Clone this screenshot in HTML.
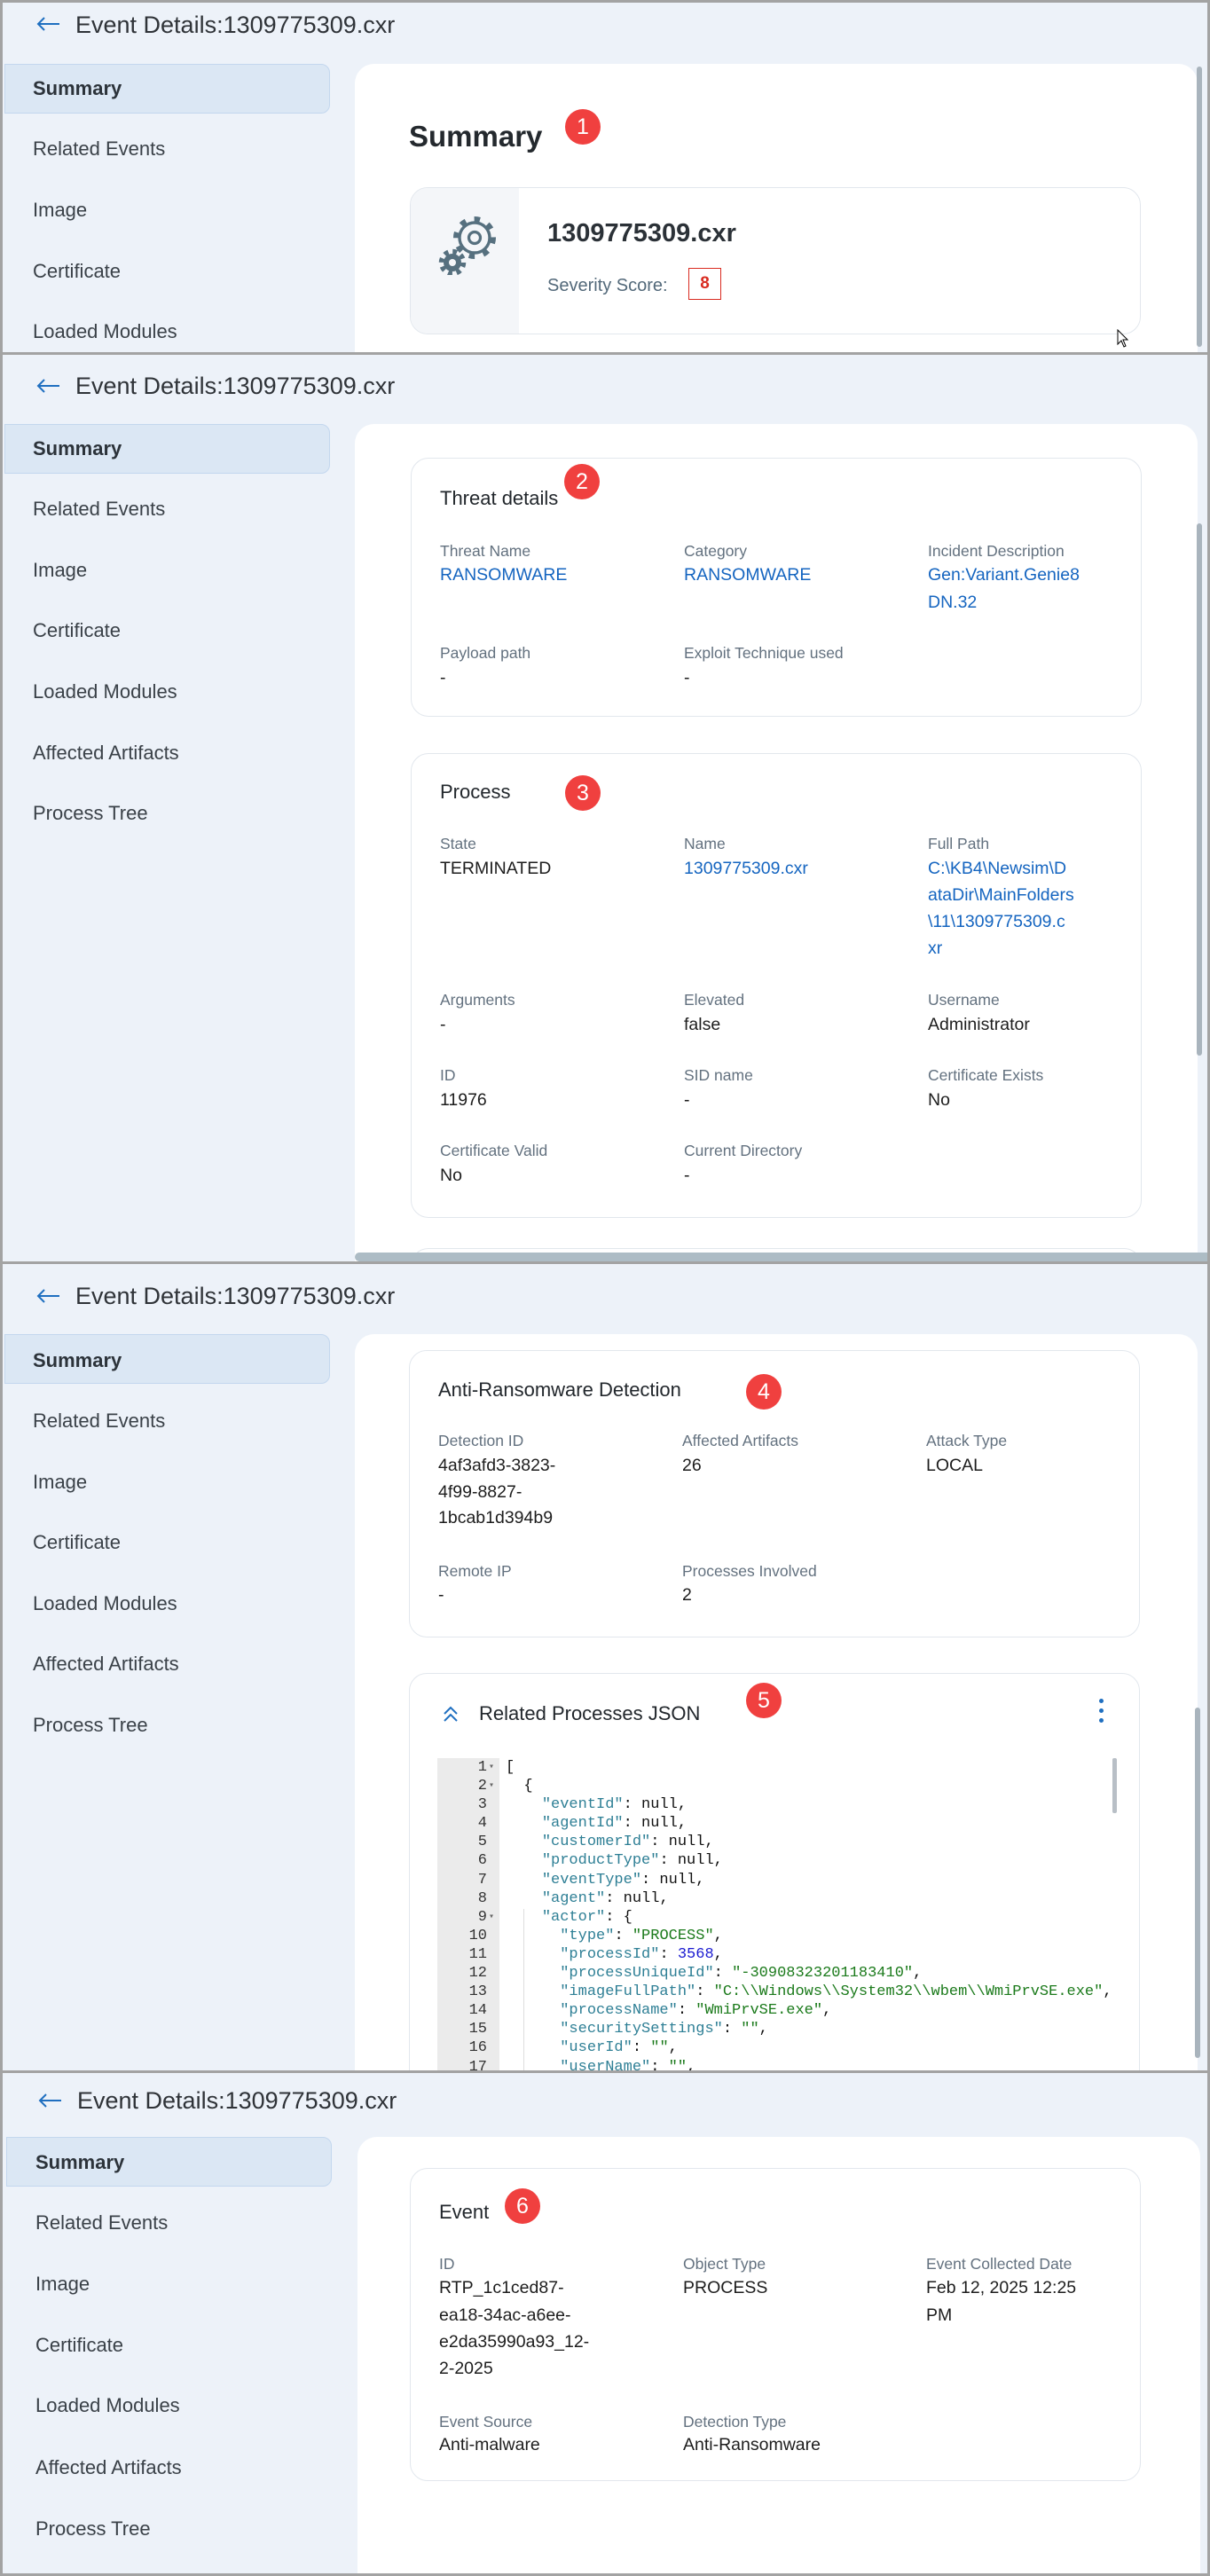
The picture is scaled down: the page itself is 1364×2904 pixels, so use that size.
<!DOCTYPE html>
<html><head><meta charset="utf-8">
<style>
*{margin:0;padding:0;box-sizing:border-box}
html,body{width:1364px;height:2904px;overflow:hidden}
body{background:#edf2f9;font-family:"Liberation Sans",Arial,sans-serif;color:#1f2327;position:relative}
.panel{position:absolute;left:0;width:1364px;background:#edf2f9;border:3px solid #a3a3a3;overflow:hidden}
.t{position:absolute;white-space:nowrap;line-height:30px}
.hd{font-size:27px;color:#2f3338}
.arr{position:absolute;width:30px;height:20px}
.side{position:absolute;left:2px;width:367px;height:56px;background:#dbe7f4;border:1.5px solid #c3d7ee;border-radius:0 10px 10px 0}
.si{font-size:22px;color:#3a4148}
.sb{font-weight:bold;color:#2c333a}
.main{position:absolute;left:397px;width:950px;background:#fff;border-radius:22px 22px 0 0}
.card{position:absolute;left:460px;width:824px;background:#fff;border:1.5px solid #e2e7ed;border-radius:20px}
.ct{font-size:22px;color:#22272c}
.lb{font-size:17.5px;color:#63717f}
.v{font-size:19.5px;color:#1d1d1d}
.b{color:#1565c0}
.badge{position:absolute;width:40px;height:40px;border-radius:50%;background:#f0403f;color:#fff;font-size:25px;text-align:center;line-height:40px}
.vs{position:absolute;width:6px;background:#a9b4bd;border-radius:3px}
.code{position:absolute;font-family:"Liberation Mono",monospace;font-size:17px;line-height:21.1px;white-space:pre;color:#111}
.k{color:#2e7f95}.s{color:#1b7a1b}.n{color:#1a1ad0}
</style></head><body>

<!-- PANEL 1 -->
<div class="panel" style="top:0;height:400px">
 <svg class="arr" style="left:36px;top:14px" viewBox="0 0 30 20"><path d="M28 10H4M11 3L4 10l7 7" fill="none" stroke="#1f6fc0" stroke-width="2"/></svg>
 <div class="t hd" style="left:82px;top:10px">Event Details:1309775309.cxr</div>
 <div class="side" style="top:69px"></div>
 <div class="t si sb" style="left:34px;top:82px">Summary</div>
 <div class="t si" style="left:34px;top:150px">Related Events</div>
 <div class="t si" style="left:34px;top:219px">Image</div>
 <div class="t si" style="left:34px;top:288px">Certificate</div>
 <div class="t si" style="left:34px;top:356px">Loaded Modules</div>
 <div class="main" style="top:69px;height:331px"></div>
 <div class="vs" style="left:1346px;top:72px;height:316px"></div>
 <div class="t" style="left:458px;top:133px;font-size:33px;font-weight:bold;line-height:36px;color:#24292e">Summary</div>
 <div class="badge" style="left:634px;top:120px">1</div>
 <div class="card" style="left:459px;top:208px;height:166px;overflow:hidden">
  <div style="position:absolute;left:0;top:0;width:122px;height:166px;background:#f4f6f9"></div>
  <svg style="position:absolute;left:22px;top:18px" width="80" height="80" viewBox="0 0 80 80">
   <g transform="translate(50,38)" fill="none" stroke="#56707f">
    <circle r="17" stroke-width="3.4"/>
    <circle r="21" stroke-width="6" stroke-dasharray="6.5 9.9"/>
    <circle r="6.5" stroke-width="3.2"/>
   </g>
   <g transform="translate(25,66)">
    <circle r="10" fill="#56707f"/>
    <circle r="12.5" fill="none" stroke="#56707f" stroke-width="5.5" stroke-dasharray="4.9 4.9"/>
    <circle r="4" fill="#f4f6f9"/>
   </g>
  </svg>
  <div class="t" style="left:154px;top:34px;font-size:29px;font-weight:bold;line-height:34px;color:#2b3137">1309775309.cxr</div>
  <div class="t" style="left:154px;top:95px;font-size:20px;color:#53697a">Severity Score:</div>
  <div style="position:absolute;left:313px;top:90px;width:37px;height:36px;border:1.5px solid #d92b20;color:#d92b20;font-size:19px;font-weight:bold;text-align:center;line-height:33px">8</div>
 </div>
 <svg style="position:absolute;left:1256px;top:368px" width="14" height="22" viewBox="0 0 14 22"><path d="M1 1v16l4-4 3 7 2-1-3-7h5z" fill="#fff" stroke="#000"/></svg>
</div>

<!-- PANEL 2 -->
<div class="panel" style="top:397px;height:1028px">
 <svg class="arr" style="left:36px;top:25px" viewBox="0 0 30 20"><path d="M28 10H4M11 3L4 10l7 7" fill="none" stroke="#1f6fc0" stroke-width="2"/></svg>
 <div class="t hd" style="left:82px;top:20px">Event Details:1309775309.cxr</div>
 <div class="side" style="top:78px"></div>
 <div class="t si sb" style="left:34px;top:91px">Summary</div>
 <div class="t si" style="left:34px;top:159px">Related Events</div>
 <div class="t si" style="left:34px;top:228px">Image</div>
 <div class="t si" style="left:34px;top:296px">Certificate</div>
 <div class="t si" style="left:34px;top:365px">Loaded Modules</div>
 <div class="t si" style="left:34px;top:434px">Affected Artifacts</div>
 <div class="t si" style="left:34px;top:502px">Process Tree</div>
 <div class="main" style="top:78px;height:950px"></div>
 <div class="vs" style="left:1346px;top:190px;height:600px"></div>

 <div class="card" style="top:116px;height:292px">
  <div class="t ct" style="left:32px;top:30px">Threat details</div>
  <div class="t lb" style="left:32px;top:89px">Threat Name</div>
  <div class="t v b" style="left:32px;top:116px">RANSOMWARE</div>
  <div class="t lb" style="left:307px;top:89px">Category</div>
  <div class="t v b" style="left:307px;top:116px">RANSOMWARE</div>
  <div class="t lb" style="left:582px;top:89px">Incident Description</div>
  <div class="t v b" style="left:582px;top:116px">Gen:Variant.Genie8</div>
  <div class="t v b" style="left:582px;top:147px">DN.32</div>
  <div class="t lb" style="left:32px;top:204px">Payload path</div>
  <div class="t v" style="left:32px;top:232px">-</div>
  <div class="t lb" style="left:307px;top:204px">Exploit Technique used</div>
  <div class="t v" style="left:307px;top:232px">-</div>
 </div>
 <div class="badge" style="left:633px;top:123px">2</div>

 <div class="card" style="top:449px;height:524px">
  <div class="t ct" style="left:32px;top:28px">Process</div>
  <div class="t lb" style="left:32px;top:86px">State</div>
  <div class="t v" style="left:32px;top:114px">TERMINATED</div>
  <div class="t lb" style="left:307px;top:86px">Name</div>
  <div class="t v b" style="left:307px;top:114px">1309775309.cxr</div>
  <div class="t lb" style="left:582px;top:86px">Full Path</div>
  <div class="t v b" style="left:582px;top:114px">C:\KB4\Newsim\D</div>
  <div class="t v b" style="left:582px;top:144px">ataDir\MainFolders</div>
  <div class="t v b" style="left:582px;top:174px">\11\1309775309.c</div>
  <div class="t v b" style="left:582px;top:204px">xr</div>
  <div class="t lb" style="left:32px;top:262px">Arguments</div>
  <div class="t v" style="left:32px;top:290px">-</div>
  <div class="t lb" style="left:307px;top:262px">Elevated</div>
  <div class="t v" style="left:307px;top:290px">false</div>
  <div class="t lb" style="left:582px;top:262px">Username</div>
  <div class="t v" style="left:582px;top:290px">Administrator</div>
  <div class="t lb" style="left:32px;top:347px">ID</div>
  <div class="t v" style="left:32px;top:375px">11976</div>
  <div class="t lb" style="left:307px;top:347px">SID name</div>
  <div class="t v" style="left:307px;top:375px">-</div>
  <div class="t lb" style="left:582px;top:347px">Certificate Exists</div>
  <div class="t v" style="left:582px;top:375px">No</div>
  <div class="t lb" style="left:32px;top:432px">Certificate Valid</div>
  <div class="t v" style="left:32px;top:460px">No</div>
  <div class="t lb" style="left:307px;top:432px">Current Directory</div>
  <div class="t v" style="left:307px;top:460px">-</div>
 </div>
 <div class="badge" style="left:634px;top:474px">3</div>
 <div class="card" style="top:1007px;height:60px"></div>
 <div style="position:absolute;left:397px;top:1012px;width:967px;height:10px;background:#adbcc5;border-radius:5px 0 0 5px;z-index:5"></div>
</div>

<!-- PANEL 3 -->
<div class="panel" style="top:1422px;height:915px">
 <svg class="arr" style="left:36px;top:26px" viewBox="0 0 30 20"><path d="M28 10H4M11 3L4 10l7 7" fill="none" stroke="#1f6fc0" stroke-width="2"/></svg>
 <div class="t hd" style="left:82px;top:21px">Event Details:1309775309.cxr</div>
 <div class="side" style="top:79px"></div>
 <div class="t si sb" style="left:34px;top:94px">Summary</div>
 <div class="t si" style="left:34px;top:162px">Related Events</div>
 <div class="t si" style="left:34px;top:231px">Image</div>
 <div class="t si" style="left:34px;top:299px">Certificate</div>
 <div class="t si" style="left:34px;top:368px">Loaded Modules</div>
 <div class="t si" style="left:34px;top:436px">Affected Artifacts</div>
 <div class="t si" style="left:34px;top:505px">Process Tree</div>
 <div class="main" style="top:79px;height:836px"></div>
 <div class="vs" style="left:1344px;top:500px;height:395px"></div>

 <div class="card" style="left:458px;top:97px;height:324px">
  <div class="t ct" style="left:32px;top:29px">Anti-Ransomware Detection</div>
  <div class="t lb" style="left:32px;top:86px">Detection ID</div>
  <div class="t v" style="left:32px;top:114px">4af3afd3-3823-</div>
  <div class="t v" style="left:32px;top:144px">4f99-8827-</div>
  <div class="t v" style="left:32px;top:173px">1bcab1d394b9</div>
  <div class="t lb" style="left:307px;top:86px">Affected Artifacts</div>
  <div class="t v" style="left:307px;top:114px">26</div>
  <div class="t lb" style="left:582px;top:86px">Attack Type</div>
  <div class="t v" style="left:582px;top:114px">LOCAL</div>
  <div class="t lb" style="left:32px;top:233px">Remote IP</div>
  <div class="t v" style="left:32px;top:260px">-</div>
  <div class="t lb" style="left:307px;top:233px">Processes Involved</div>
  <div class="t v" style="left:307px;top:260px">2</div>
 </div>
 <div class="badge" style="left:838px;top:124px">4</div>

 <div class="card" style="left:458px;top:461px;height:600px;overflow:hidden">
  <svg style="position:absolute;left:36px;top:33px" width="20" height="24" viewBox="0 0 20 24"><path d="M3 12l7-7 7 7M3 20l7-7 7 7" fill="none" stroke="#1f6fc0" stroke-width="2"/></svg>
  <div class="t ct" style="left:78px;top:30px">Related Processes JSON</div>
  <div style="position:absolute;left:777px;top:28px;width:5px;height:5px;border-radius:50%;background:#1f6fc0;box-shadow:0 11px 0 #1f6fc0,0 22px 0 #1f6fc0"></div>
  <div style="position:absolute;left:31px;top:95px;width:70px;height:400px;background:#ebebeb"></div>
  <div class="code" style="left:31px;top:95px;width:56px;text-align:right;color:#333">1
2
3
4
5
6
7
8
9
10
11
12
13
14
15
16
17</div>
  <div class="code" style="left:89px;top:95px;font-size:10px;color:#666">▾
▾






▾</div>
  <div style="position:absolute;left:792px;top:95px;width:5px;height:62px;background:#b8bfc6;border-radius:2px"></div>
  <div style="position:absolute;left:128px;top:265px;width:1px;height:200px;background:#ddd"></div>
  <div class="code" style="left:108px;top:95px">[
  {
    <span class="k">"eventId"</span>: null,
    <span class="k">"agentId"</span>: null,
    <span class="k">"customerId"</span>: null,
    <span class="k">"productType"</span>: null,
    <span class="k">"eventType"</span>: null,
    <span class="k">"agent"</span>: null,
    <span class="k">"actor"</span>: {
      <span class="k">"type"</span>: <span class="s">"PROCESS"</span>,
      <span class="k">"processId"</span>: <span class="n">3568</span>,
      <span class="k">"processUniqueId"</span>: <span class="s">"-30908323201183410"</span>,
      <span class="k">"imageFullPath"</span>: <span class="s">"C:\\Windows\\System32\\wbem\\WmiPrvSE.exe"</span>,
      <span class="k">"processName"</span>: <span class="s">"WmiPrvSE.exe"</span>,
      <span class="k">"securitySettings"</span>: <span class="s">""</span>,
      <span class="k">"userId"</span>: <span class="s">""</span>,
      <span class="k">"userName"</span>: <span class="s">""</span>,</div>
 </div>
 <div class="badge" style="left:838px;top:472px">5</div>
</div>

<!-- PANEL 4 -->
<div class="panel" style="top:2334px;height:570px">
 <svg class="arr" style="left:38px;top:21px" viewBox="0 0 30 20"><path d="M28 10H4M11 3L4 10l7 7" fill="none" stroke="#1f6fc0" stroke-width="2"/></svg>
 <div class="t hd" style="left:84px;top:16px">Event Details:1309775309.cxr</div>
 <div class="side" style="top:72px;left:4px"></div>
 <div class="t si sb" style="left:37px;top:86px">Summary</div>
 <div class="t si" style="left:37px;top:154px">Related Events</div>
 <div class="t si" style="left:37px;top:223px">Image</div>
 <div class="t si" style="left:37px;top:292px">Certificate</div>
 <div class="t si" style="left:37px;top:360px">Loaded Modules</div>
 <div class="t si" style="left:37px;top:430px">Affected Artifacts</div>
 <div class="t si" style="left:37px;top:499px">Process Tree</div>
 <div class="main" style="top:72px;left:400px;height:492px"></div>

 <div class="card" style="left:459px;top:107px;height:353px">
  <div class="t ct" style="left:32px;top:34px">Event</div>
  <div class="t lb" style="left:32px;top:92px">ID</div>
  <div class="t v" style="left:32px;top:119px">RTP_1c1ced87-</div>
  <div class="t v" style="left:32px;top:150px">ea18-34ac-a6ee-</div>
  <div class="t v" style="left:32px;top:180px">e2da35990a93_12-</div>
  <div class="t v" style="left:32px;top:210px">2-2025</div>
  <div class="t lb" style="left:307px;top:92px">Object Type</div>
  <div class="t v" style="left:307px;top:119px">PROCESS</div>
  <div class="t lb" style="left:581px;top:92px">Event Collected Date</div>
  <div class="t v" style="left:581px;top:119px">Feb 12, 2025 12:25</div>
  <div class="t v" style="left:581px;top:150px">PM</div>
  <div class="t lb" style="left:32px;top:270px">Event Source</div>
  <div class="t v" style="left:32px;top:296px">Anti-malware</div>
  <div class="t lb" style="left:307px;top:270px">Detection Type</div>
  <div class="t v" style="left:307px;top:296px">Anti-Ransomware</div>
 </div>
 <div class="badge" style="left:566px;top:130px">6</div>
</div>
</body></html>
